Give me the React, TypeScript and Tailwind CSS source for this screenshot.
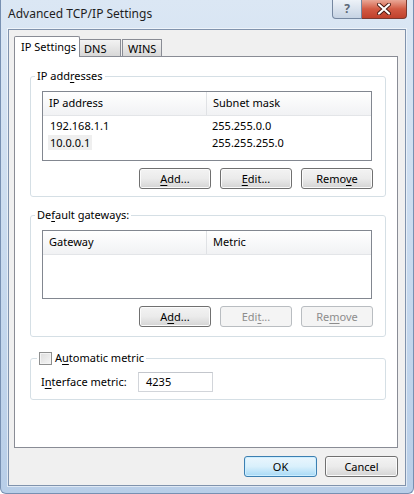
import React from 'react';

const U = ({ children }: { children: React.ReactNode }) => (
  <span className="underline underline-offset-[2px] decoration-1">{children}</span>
);

type BtnProps = { children: React.ReactNode; disabled?: boolean; focused?: boolean; wide?: boolean };

function Btn({ children, disabled, focused, wide }: BtnProps) {
  const base = 'h-[21px] rounded-[3px] border text-[11px] leading-[19px] text-center';
  const width = wide ? 'w-[73px]' : 'w-[72px]';
  let look = 'border-[#707070] bg-gradient-to-b from-[#f3f3f3] via-[#ebebeb] to-[#d4d4d4] text-black shadow-[inset_0_0_0_1px_#fbfbfb]';
  if (disabled) look = 'border-[#b9bdc1] bg-[#f4f4f4] text-[#8d8d8d]';
  if (focused) look = 'border-[#3c7fb1] bg-gradient-to-b from-[#eaf6fd] via-[#d9f0fc] to-[#a7d9f5] text-black shadow-[inset_0_0_0_1px_#cdeeff]';
  return <div className={[base, width, look].join(' ')}>{children}</div>;
}

function ListView({ cols, rows, height }: { cols: [string, string]; rows: [React.ReactNode, string][]; height: string }) {
  return (
    <div className={`w-[330px] ${height} border border-[#828790] bg-white`}>
      <div className="h-[24px] flex items-center bg-gradient-to-b from-white to-[#f1f2f4] border-b border-[#e3e5e8]">
        <div className="w-[164px] h-full flex items-center pl-[6px] border-r border-[#e0e2e5]">{cols[0]}</div>
        <div className="flex-1 h-full flex items-center pl-[6px]">{cols[1]}</div>
      </div>
      <div className="pt-[2px]">
        {rows.map(([a, b], i) => (
          <div key={i} className="h-[17px] flex items-center">
            <div className="w-[165px] pl-[5px]">{a}</div>
            <div className="pl-[4px]">{b}</div>
          </div>
        ))}
      </div>
    </div>
  );
}

export default function App() {
  return (
    <div className="w-[414px] h-[494px] overflow-hidden bg-gradient-to-b from-[#dbe7f4] via-[#c9dbef] to-[#b8cee8] border-x border-b border-[#7790b2] rounded-b-[6px] font-['Noto_Sans','Liberation_Sans',sans-serif] text-[11px] text-black">
      {/* title bar */}
      <div className="h-[29px] flex items-start">
        <div className="pl-[7px] pt-[6px] text-[12px] leading-[16px] text-[#1e1e1e]">Advanced TCP/IP Settings</div>
        <div className="ml-auto mr-[6px] flex">
          <div className="w-[30px] h-[19px] rounded-bl-[4px] border border-t-0 border-[#7587a0] bg-gradient-to-b from-[#edf2f8] to-[#c6d3e3] flex items-center justify-center text-[12px] font-bold text-[#5b6776] leading-none">?</div>
          <div className="w-[45px] h-[19px] rounded-br-[4px] border border-t-0 border-l-0 border-[#7a3a30] bg-gradient-to-b from-[#e9a796] via-[#d25a43] to-[#c0412c] flex items-center justify-center">
            <svg width="14" height="12" viewBox="0 0 14 12">
              <path d="M2 1.5 L12 10.5 M12 1.5 L2 10.5" stroke="#4a1a12" strokeWidth="4" strokeLinecap="round" />
              <path d="M2 1.5 L12 10.5 M12 1.5 L2 10.5" stroke="#ffffff" strokeWidth="2.2" strokeLinecap="round" />
            </svg>
          </div>
        </div>
      </div>

      {/* client area */}
      <div className="mx-[7px] h-[457px] border border-[#8093ad] bg-[#f0f0f0] flex flex-col shadow-[0_0_0_1px_rgba(255,255,255,0.55)]">
        {/* tabs */}
        <div className="h-[20px] mt-[6px] ml-[5px] flex items-end">
          <div className="relative z-10 w-[66px] h-[21px] -mb-px bg-white border border-b-0 border-[#898c95] rounded-t-[2px] pl-[6px] pt-[2px] leading-[16px]">IP Settings</div>
          <div className="w-[41px] h-[17px] border border-b-0 border-l-0 border-[#898c95] bg-gradient-to-b from-[#f3f3f3] to-[#d8d8d8] pl-[4px] leading-[17px]">DNS</div>
          <div className="ml-[1px] w-[40px] h-[17px] border border-b-0 border-[#898c95] bg-gradient-to-b from-[#f3f3f3] to-[#d8d8d8] pl-[5px] leading-[17px]">WINS</div>
        </div>

        {/* tab panel */}
        <div className="ml-[5px] w-[384px] h-[392px] bg-white border border-[#898c95] px-[15px]">
          {/* IP addresses */}
          <fieldset className="mt-[11px] w-[356px] border border-[#d5dfe5] rounded-[3px] p-0">
            <legend className="ml-[4px] px-[2px] leading-[16px]">IP add<U>r</U>esses</legend>
            <div className="px-[11px] pt-[7px] pb-[7px]">
              <ListView
                height="h-[70px]"
                cols={['IP address', 'Subnet mask']}
                rows={[
                  [<span className="px-[2px]">192.168.1.1</span>, '255.255.0.0'],
                  [<span className="px-[2px] bg-[#efefef]">10.0.0.1</span>, '255.255.255.0'],
                ]}
              />
              <div className="mt-[7px] flex justify-end gap-[9px] pr-[1px]">
                <Btn><U>A</U>dd...</Btn>
                <Btn><U>E</U>dit...</Btn>
                <Btn>Remo<U>v</U>e</Btn>
              </div>
            </div>
          </fieldset>

          {/* Default gateways */}
          <fieldset className="mt-[10px] w-[356px] border border-[#d5dfe5] rounded-[3px] p-0">
            <legend className="ml-[4px] px-[2px] leading-[16px]">De<U>f</U>ault gateways:</legend>
            <div className="px-[11px] pt-[7px] pb-[9px]">
              <ListView height="h-[69px]" cols={['Gateway', 'Metric']} rows={[]} />
              <div className="mt-[7px] flex justify-end gap-[9px] pr-[1px]">
                <Btn>A<U>d</U>d...</Btn>
                <Btn disabled>Edi<U>t</U>...</Btn>
                <Btn disabled>Re<U>m</U>ove</Btn>
              </div>
            </div>
          </fieldset>

          {/* Metric */}
          <fieldset className="mt-[13px] w-[356px] border border-[#d5dfe5] rounded-[3px] p-0">
            <legend className="ml-[6px] px-[2px] leading-[16px] flex items-center gap-[3px]">
              <span className="w-[13px] h-[13px] border border-[#8e8f8f] bg-gradient-to-br from-[#dcdcdc] to-[#f6f6f6] shadow-[inset_0_0_0_1px_#f4f4f4]" />
              <span>A<U>u</U>tomatic metric</span>
            </legend>
            <div className="pl-[10px] pt-[6px] pb-[7px] flex items-center">
              <div className="w-[97px]">I<U>n</U>terface metric:</div>
              <div className="w-[75px] h-[20px] border border-[#d2d5da] border-t-[#c3c6cc] pl-[7px] leading-[18px]">4235</div>
            </div>
          </fieldset>
        </div>

        {/* dialog buttons */}
        <div className="mt-[8px] mr-[7px] flex justify-end gap-[8px]">
          <Btn focused wide>OK</Btn>
          <Btn wide>Cancel</Btn>
        </div>
      </div>
    </div>
  );
}
